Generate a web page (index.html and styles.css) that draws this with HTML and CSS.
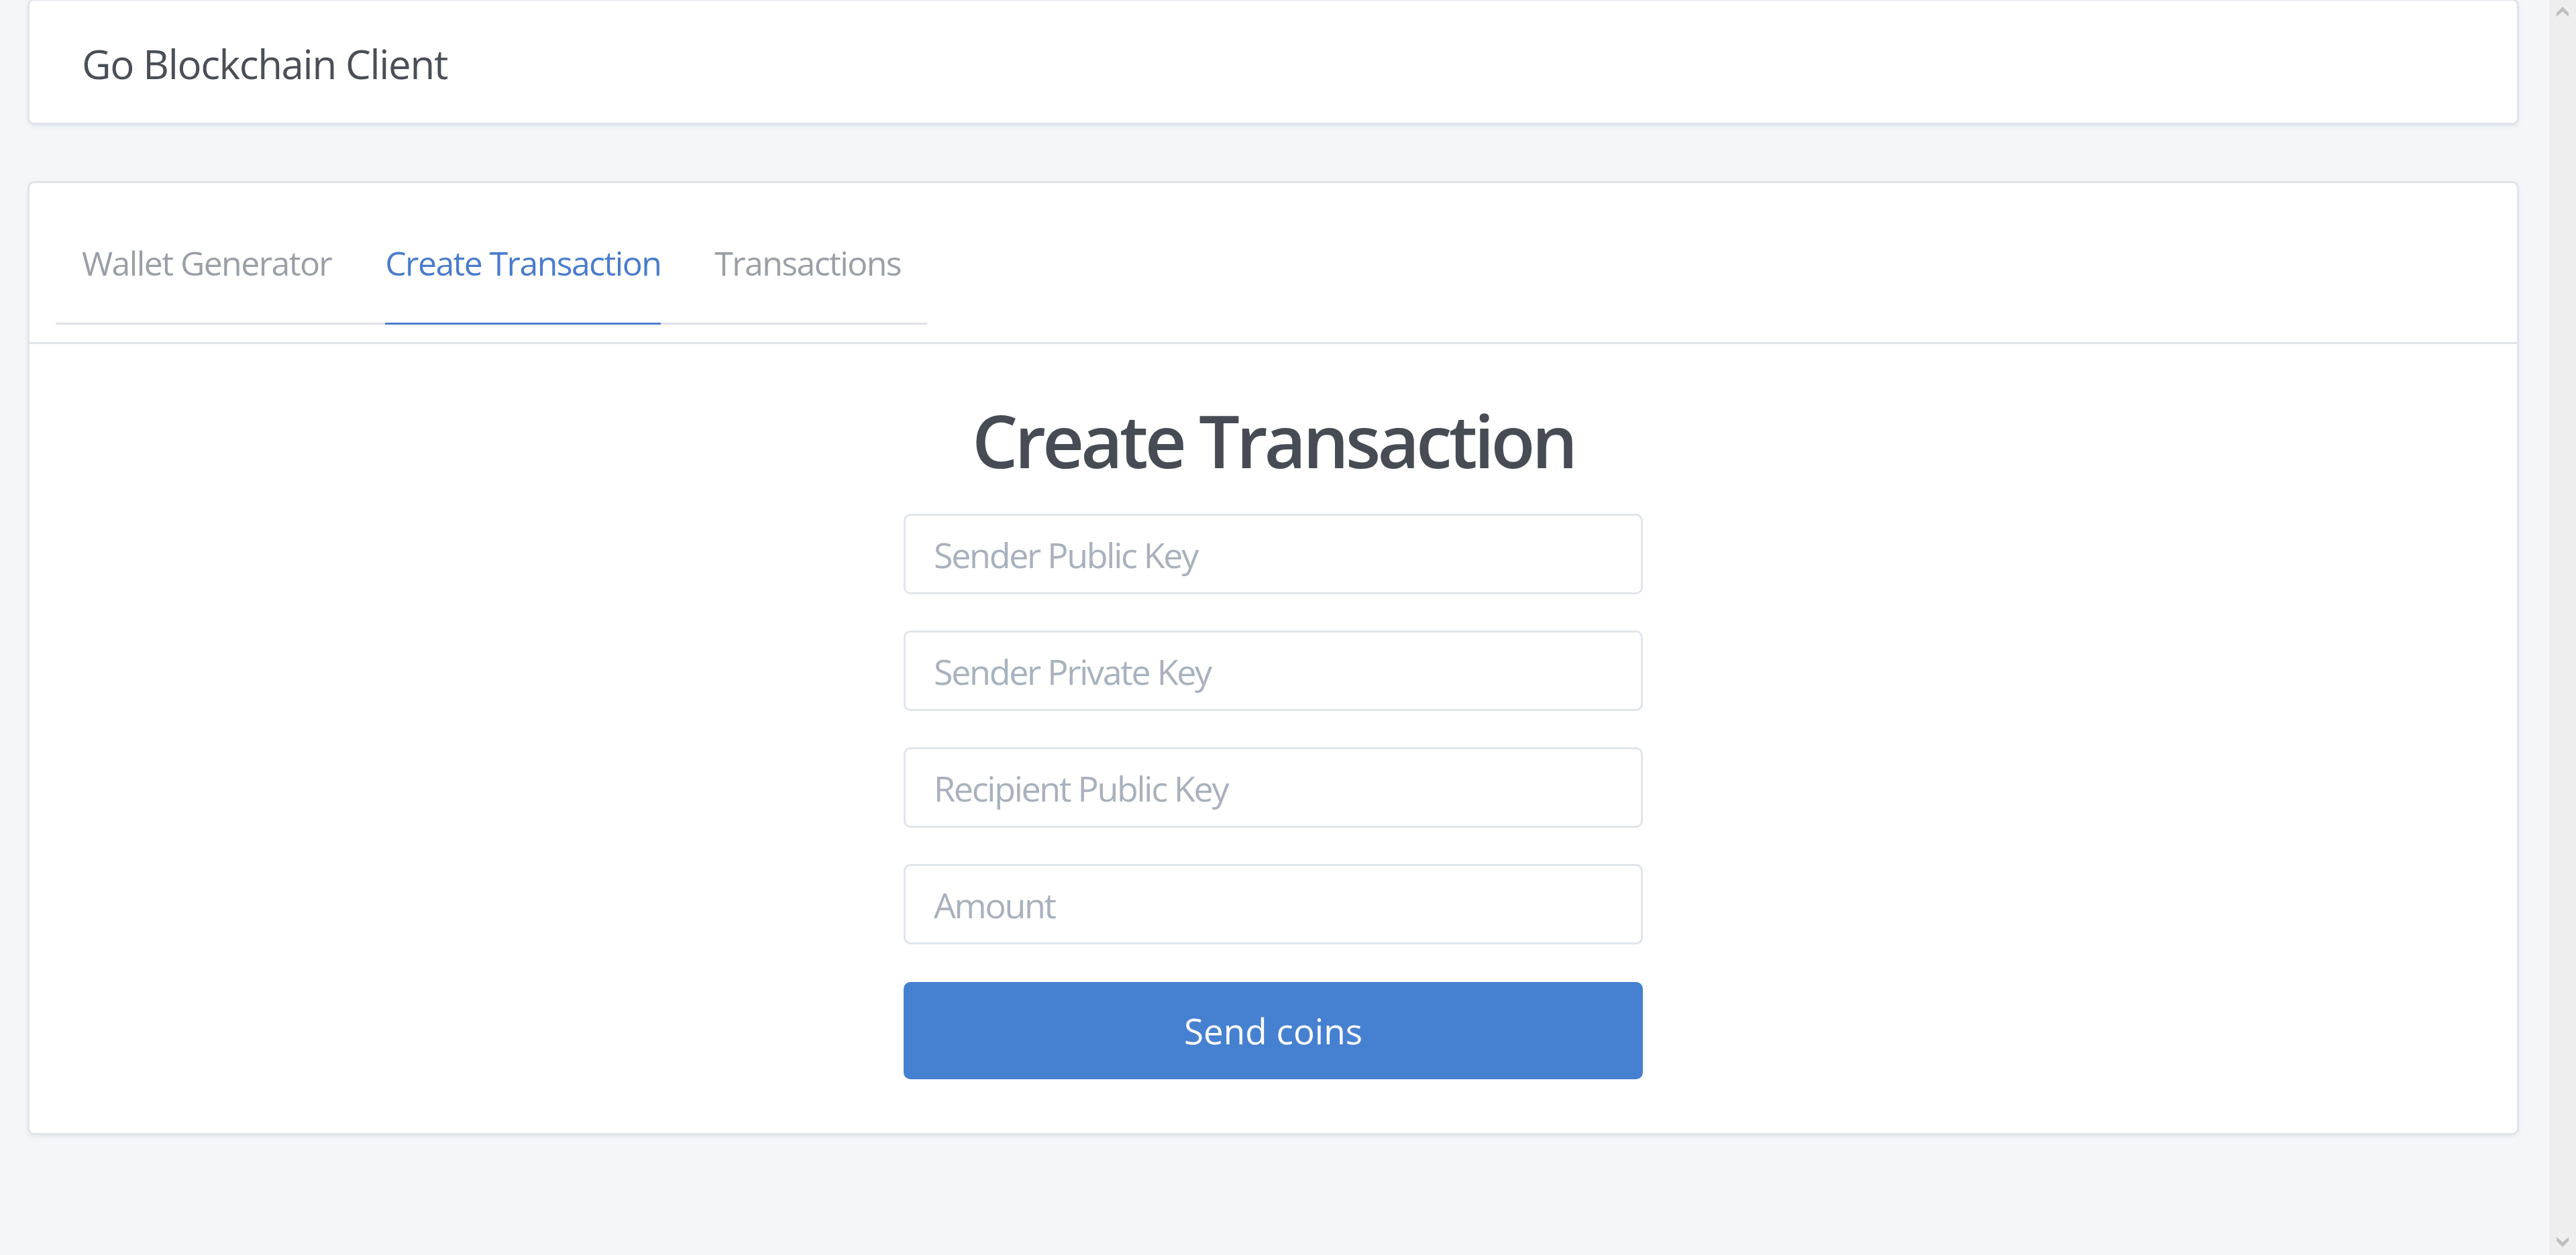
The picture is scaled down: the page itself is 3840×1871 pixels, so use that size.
FILE: index.html
```html
<!DOCTYPE html>
<html lang="en">
<head>
<meta charset="utf-8">
<title>Go Blockchain Client</title>
<link rel="stylesheet" href="styles.css">
</head>
<body>
<div class="page">
  <header class="card top-card">
    <div class="brand">Go Blockchain Client</div>
  </header>
  <main class="card main-card">
    <div class="card-header">
      <ul class="tabs">
        <li class="tab">Wallet Generator</li>
        <li class="tab active">Create Transaction</li>
        <li class="tab">Transactions</li>
      </ul>
    </div>
    <div class="card-body">
      <h1 class="title">Create Transaction</h1>
      <form class="form">
        <input class="field" type="text" placeholder="Sender Public Key">
        <input class="field" type="text" placeholder="Sender Private Key">
        <input class="field" type="text" placeholder="Recipient Public Key">
        <input class="field" type="text" placeholder="Amount">
        <button class="send" type="button">Send coins</button>
      </form>
    </div>
  </main>
</div>
<div class="scrollbar">
  <svg class="arrow" width="18" height="16" viewBox="0 0 18 16"><polygon points="0,10 9,1 18,10 18,16 9,8 0,16" fill="#bfbfbf"/></svg>
  <svg class="arrow" width="18" height="16" viewBox="0 0 18 16"><polygon points="0,0 9,8 18,0 18,6 9,15 0,6" fill="#bfbfbf"/></svg>
</div>
</body>
</html>
```
FILE: styles.css
```css
html, body {
  margin: 0;
  padding: 0;
}
body {
  background: #f4f6fa;
  font-family: "Open Sans", "Noto Sans", sans-serif;
  color: #4a4f57;
  min-height: 1871px;
}
.page {
  padding: 0 85px 0 41px;
}
.card {
  background: #fff;
  border: 3px solid #e0e4eb;
  border-radius: 10px;
  box-shadow: 0 3px 5px rgba(200, 206, 216, 0.35);
  box-sizing: border-box;
}
.top-card {
  height: 188px;
  margin-top: -2px;
  display: flex;
  align-items: center;
  padding-left: 78px;
  padding-top: 6px;
}
.brand {
  font-size: 60px;
  letter-spacing: -1.35px;
  color: #4a4f57;
}
.main-card {
  margin-top: 84px;
}
.card-header {
  border-bottom: 3px solid #e0e4eb;
  padding: 30px 39px 26px;
}
.tabs {
  list-style: none;
  margin: 0;
  padding: 0 39px;
  display: inline-flex;
  gap: 80px;
  border-bottom: 3px solid #dfe2e7;
}
.tab {
  font-size: 50px;
  letter-spacing: -1.6px;
  line-height: 80px;
  padding: 49px 0 49px;
  color: #9a9fa7;
  margin-bottom: -3px;
  border-bottom: 3px solid transparent;
}
.tab.active {
  color: #4a7ccc;
  border-bottom-color: #4a7fd0;
}
.card-body {
  padding: 79px 0 80px;
  display: flex;
  flex-direction: column;
  align-items: center;
}
.title {
  margin: 0 0 44px;
  font-size: 108px;
  letter-spacing: -5px;
  line-height: 130px;
  font-weight: 600;
  color: #474c54;
}
.form {
  width: 1102px;
  display: flex;
  flex-direction: column;
  gap: 54px;
}
.field {
  box-sizing: border-box;
  height: 120px;
  width: 100%;
  border: 3px solid #e0e5ec;
  border-radius: 10px;
  padding: 0 42px;
  font-family: inherit;
  font-size: 52px;
  letter-spacing: -2.3px;
  color: #4a4f57;
  outline: none;
}
.field::placeholder {
  color: #a8b1bd;
}
.send {
  margin-top: 2px;
  height: 145px;
  border: none;
  border-radius: 10px;
  background: #4680d0;
  color: #fff;
  font-family: inherit;
  font-size: 53px;
}
.scrollbar {
  position: fixed;
  top: 0;
  right: 0;
  width: 42px;
  height: 100%;
  background: #eeeeee;
  border-left: 2px solid #f7f7f7;
  display: flex;
  flex-direction: column;
  justify-content: space-between;
  align-items: center;
  padding: 9px 0 11px;
  box-sizing: border-box;
}
```
